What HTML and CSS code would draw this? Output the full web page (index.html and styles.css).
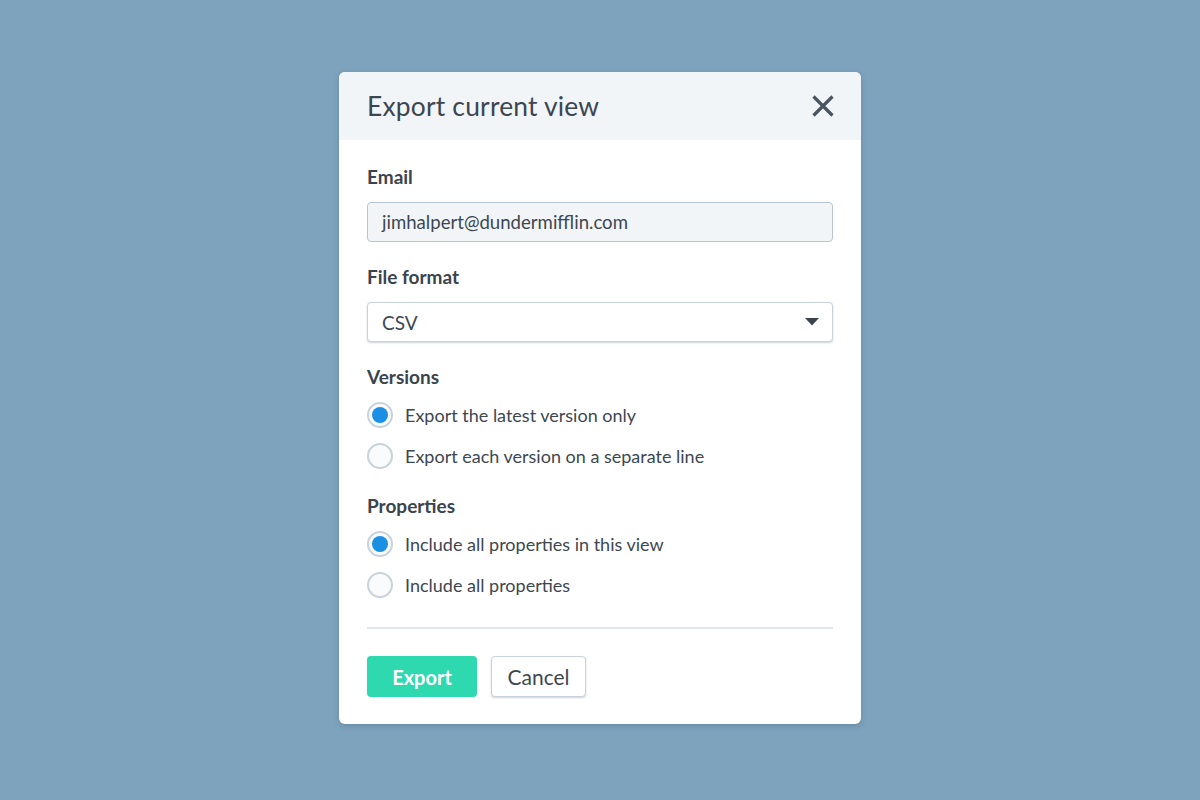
FILE: index.html
```html
<!DOCTYPE html>
<html>
<head>
<meta charset="utf-8">
<link rel="stylesheet" href="styles.css">
</head>
<body>
<div class="modal">
  <div class="modal-header">
    <h1 class="title">Export current view</h1>
    <button class="close" aria-label="Close">
      <svg width="24" height="24" viewBox="0 0 24 24"><path d="M2.5 2.5 L21.5 21.5 M21.5 2.5 L2.5 21.5" stroke="#4a5560" stroke-width="3.2" stroke-linecap="butt" fill="none"/></svg>
    </button>
  </div>
  <div class="modal-body">
    <div class="field">
      <div class="label">Email</div>
      <div class="input">jimhalpert@dundermifflin.com</div>
    </div>
    <div class="field">
      <div class="label">File format</div>
      <div class="select">
        <span>CSV</span>
        <svg width="14" height="8" viewBox="0 0 14 8"><path d="M0 0 H14 L7 7.5 Z" fill="#3a444e"/></svg>
      </div>
    </div>
    <div class="field field-radios">
      <div class="label">Versions</div>
      <div class="radios">
        <div class="radio-row"><span class="radio checked"></span><span>Export the latest version only</span></div>
        <div class="radio-row"><span class="radio"></span><span>Export each version on a separate line</span></div>
      </div>
    </div>
    <div class="field field-radios">
      <div class="label">Properties</div>
      <div class="radios">
        <div class="radio-row"><span class="radio checked"></span><span>Include all properties in this view</span></div>
        <div class="radio-row"><span class="radio"></span><span>Include all properties</span></div>
      </div>
    </div>
    <div class="divider"></div>
    <div class="actions">
      <button class="btn btn-primary">Export</button>
      <button class="btn btn-secondary">Cancel</button>
    </div>
  </div>
</div>
</body>
</html>
```

FILE: styles.css
```css
html, body {
  margin: 0;
  padding: 0;
}
body {
  width: 1200px;
  height: 800px;
  background: #7ea3bd;
  font-family: "Lato", "Open Sans", sans-serif;
  color: #3d4750;
  display: flex;
  justify-content: center;
  align-items: flex-start;
}
.modal {
  margin-top: 72px;
  width: 522px;
  background: #ffffff;
  border-radius: 6px;
  overflow: hidden;
  box-shadow: 0 2px 6px rgba(40, 70, 95, 0.25);
}
.modal-header {
  height: 68px;
  background: #f2f5f8;
  display: flex;
  align-items: center;
  justify-content: space-between;
  padding: 0 26px 0 28px;
}
.title {
  margin: 0;
  font-size: 26.4px;
  font-weight: 400;
  color: #3c4650;
  letter-spacing: 0.2px;
}
.close {
  border: 0;
  background: transparent;
  padding: 0;
  width: 24px;
  height: 24px;
  display: flex;
}
.modal-body {
  padding: 26px 28px 27px 28px;
}
.field {
  margin-bottom: 24px;
}
.field-radios {
  margin-bottom: 26px;
}
.label {
  font-size: 19px;
  font-weight: 700;
  color: #3a444d;
  line-height: 22px;
  margin-bottom: 14px;
}
.input, .select {
  height: 40px;
  box-sizing: border-box;
  border-radius: 4px;
  padding: 0 14px;
  display: flex;
  align-items: center;
  color: #3d4750;
}
.input {
  background: #f2f5f8;
  border: 1px solid #b8c5d0;
  font-size: 18.6px;
}
.select {
  background: #ffffff;
  border: 1px solid #c8d2da;
  box-shadow: 0 1px 2px rgba(60, 80, 100, 0.25);
  justify-content: space-between;
  padding-right: 13px;
  font-size: 19px;
}
.radios {
  display: flex;
  flex-direction: column;
  gap: 15px;
}
.radio-row {
  display: flex;
  align-items: center;
  gap: 12px;
  font-size: 18px;
  height: 26px;
  color: #3d4750;
}
.radio {
  width: 26px;
  height: 26px;
  box-sizing: border-box;
  border-radius: 50%;
  border: 2px solid #c8d2da;
  background: #f9fbfc;
  display: flex;
  align-items: center;
  justify-content: center;
  flex: none;
}
.radio.checked::after {
  content: "";
  width: 16px;
  height: 16px;
  border-radius: 50%;
  background: #1a8fe3;
}
.divider {
  height: 2px;
  background: #dfe6ec;
  margin-top: 29px;
  margin-bottom: 27px;
}
.actions {
  display: flex;
  gap: 14px;
}
.btn {
  height: 41px;
  box-sizing: border-box;
  border-radius: 4px;
  font-family: inherit;
  font-size: 20px;
  padding: 0;
}
.btn-primary {
  width: 110px;
  background: #2ed9b0;
  border: 0;
  color: #ffffff;
  font-weight: 700;
}
.btn-secondary {
  width: 95px;
  background: #ffffff;
  border: 1px solid #c8d2da;
  box-shadow: 0 1px 2px rgba(60, 80, 100, 0.25);
  color: #3d4750;
  font-weight: 400;
  font-size: 21px;
}
```
